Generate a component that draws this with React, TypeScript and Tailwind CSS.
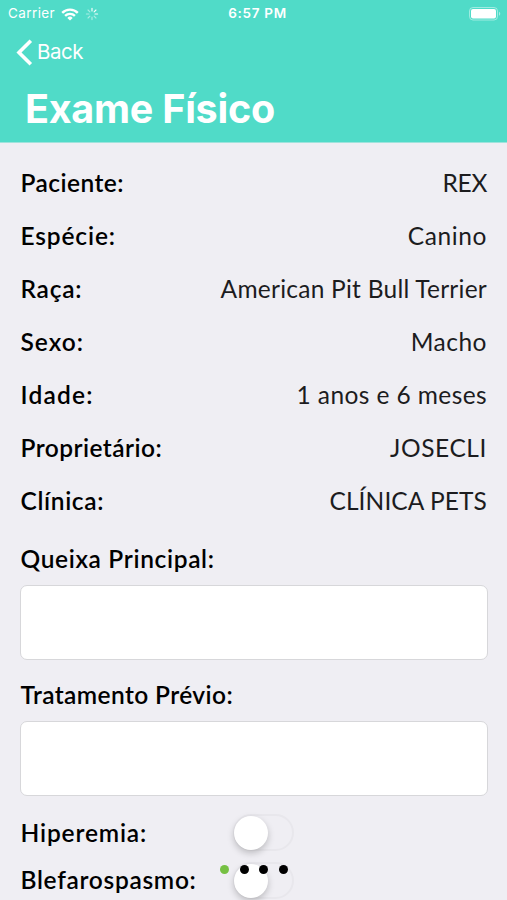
import { FC } from "react";
import clsx from "clsx";

type Detail = {
  label: string;
  labelClass: string;
  value: string;
  valueClass: string;
};

const details: Detail[] = [
  { label: "Paciente:", labelClass: "tracking-[0.45px]", value: "REX", valueClass: "tracking-[-0.3px]" },
  { label: "Espécie:", labelClass: "tracking-[0.85px]", value: "Canino", valueClass: "tracking-[0.6px]" },
  { label: "Raça:", labelClass: "tracking-[0.75px]", value: "American Pit Bull Terrier", valueClass: "tracking-[0.25px]" },
  { label: "Sexo:", labelClass: "tracking-[1.05px]", value: "Macho", valueClass: "tracking-[0.5px]" },
  { label: "Idade:", labelClass: "tracking-[1.2px]", value: "1 anos e 6 meses", valueClass: "tracking-[0.4px]" },
  { label: "Proprietário:", labelClass: "tracking-[0.45px]", value: "JOSECLI", valueClass: "tracking-[0.6px]" },
  { label: "Clínica:", labelClass: "tracking-[0.65px]", value: "CLÍNICA PETS", valueClass: "tracking-[0.1px]" },
];

const spokes = [0, 45, 90, 135, 180, 225, 270, 315];

const StatusBar: FC = () => (
  <div className="flex h-7 items-center text-[13.5px] leading-none">
    <div className="flex flex-1 items-center pl-2">
      <span className="tracking-[0.4px]">Carrier</span>
      <svg className="ml-[6px]" width="18" height="13" viewBox="0 0 18 13" fill="none" stroke="white" strokeWidth="2.4">
        <path d="M1.2 4.9a11 11 0 0 1 15.6 0" />
        <path d="M4.1 7.9a7 7 0 0 1 9.8 0" />
        <path d="M9 12.6 6.3 9.9a3.8 3.8 0 0 1 5.4 0z" fill="white" stroke="none" />
      </svg>
      <svg className="ml-[6px]" width="14" height="14" viewBox="-7 -7 14 14" stroke="white" strokeWidth="1.2" strokeLinecap="round">
        {spokes.map((angle, i) => (
          <line key={angle} x1="0" y1="-3" x2="0" y2="-5.6" transform={`rotate(${angle})`} opacity={i < 3 ? 0.95 : 0.5} />
        ))}
      </svg>
    </div>
    <span className="ml-[6px] font-semibold tracking-[0.7px]">6:57 PM</span>
    <div className="flex flex-1 justify-end pr-[6px]">
      <svg width="32" height="14" viewBox="0 0 32 14">
        <rect x="0.5" y="0.5" width="28" height="12.5" rx="3.5" fill="none" stroke="white" strokeOpacity="0.45" />
        <rect x="2" y="2" width="25" height="9.5" rx="2" fill="white" />
        <path d="M30 4.8v4a2.2 2.2 0 0 0 0-4" fill="white" fillOpacity="0.5" />
      </svg>
    </div>
  </div>
);

const Header: FC = () => (
  <header className="h-[143px] border-b border-[#9fe3dc] bg-[#50dbc8] font-['Inter',sans-serif] text-white">
    <StatusBar />
    <div className="flex h-12 items-center pl-4">
      <svg width="17" height="27" viewBox="0 0 17 27" fill="none" stroke="white" strokeWidth="3.6">
        <path d="M14.8 1.8 3 13.5l11.8 11.7" />
      </svg>
      <span className="ml-[4px] pt-px text-[20.5px] leading-none tracking-[-0.45px]">Back</span>
    </div>
    <h1 className="pl-[25px] pt-[13px] text-[39.5px] font-bold leading-[40px] tracking-[-0.25px]">Exame Físico</h1>
  </header>
);

const TextField: FC<{ label: string; className: string }> = ({ label, className }) => (
  <div className="h-[136px]">
    <p className={clsx("h-[50px] pl-[0.5px] pt-[9px] font-semibold leading-[30px]", className)}>{label}</p>
    <div className="h-[75px] w-[468px] rounded-[7px] border-[1.5px] border-[#d7d7da] bg-white" />
  </div>
);

const SwitchRow: FC<{ label: string; className: string }> = ({ label, className }) => (
  <div className="flex h-[47.5px] items-center">
    <span className={clsx("w-[213px] pl-[0.5px] font-semibold", className)}>{label}</span>
    <div className="h-[37px] w-[61px] rounded-full border-2 border-[#e8e7ec]">
      <div className="-ml-px size-[34px] rounded-full bg-white shadow-[0_3px_7px_rgba(0,0,0,0.22)]" />
    </div>
  </div>
);

const App: FC = () => {
  return (
    <div className="relative h-[900px] w-[507px] overflow-hidden bg-[#efeef3] font-['Lato',sans-serif] text-[24.5px] leading-[30px] text-black">
      <Header />
      <main className="px-5 pt-[13px]">
        {details.map((d) => (
          <div key={d.label} className="flex h-[53px] items-center justify-between whitespace-nowrap">
            <span className={clsx("pl-[0.5px] font-semibold", d.labelClass)}>{d.label}</span>
            <span className={clsx("text-[#1c1c1e]", d.valueClass)}>{d.value}</span>
          </div>
        ))}
        <div className="pb-[2px] pt-[8px]">
          <TextField label="Queixa Principal:" className="tracking-[0.65px]" />
          <TextField label="Tratamento Prévio:" className="tracking-[0.4px]" />
        </div>
        <SwitchRow label="Hiperemia:" className="tracking-[0.85px]" />
        <SwitchRow label="Blefarospasmo:" className="tracking-[0.7px]" />
      </main>
      {/* page indicator, floats over the form */}
      <div className="absolute left-[220px] top-[865px] flex gap-[10.7px]">
        <span className="size-[9px] rounded-full bg-[#76c043]" />
        <span className="size-[9px] rounded-full bg-black" />
        <span className="size-[9px] rounded-full bg-black" />
        <span className="size-[9px] rounded-full bg-black" />
      </div>
    </div>
  );
};
export default App;
